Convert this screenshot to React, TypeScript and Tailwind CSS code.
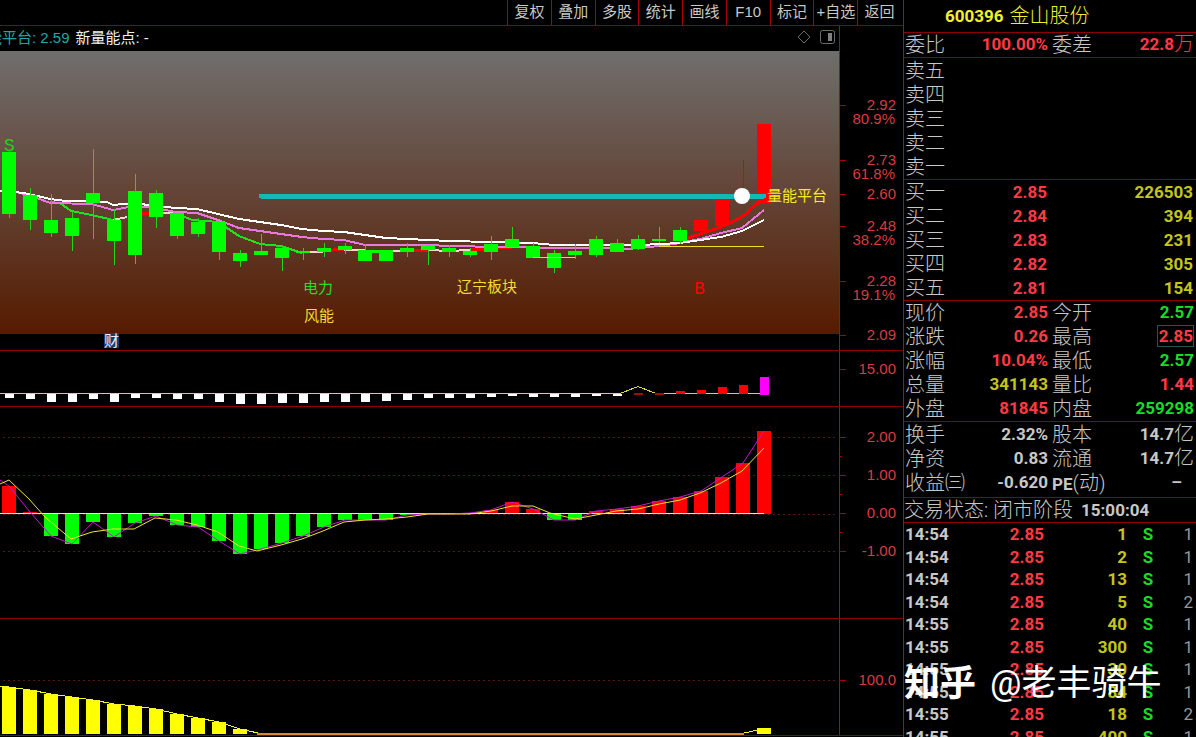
import type { ReactNode } from 'react'
import clsx from 'clsx'

const tools = ['复权', '叠加', '多股', '统计', '画线', 'F10', '标记', '+自选', '返回']

// All panes share one coordinate space: x 0-839, y 26-735.
const CHART_WIDTH = 839
const AXIS_WIDTH = 64

const barX = (i: number) => Math.round(9 + i * 20.97)

// [high, body top, body bottom, low]
const candles = [
  [152, 152, 214, 218],
  [188, 195, 220, 230],
  [194, 220, 233, 237],
  [212, 218, 236, 251],
  [149, 193, 203, 239],
  [209, 220, 241, 265],
  [174, 191, 255, 264],
  [190, 193, 217, 228],
  [213, 213, 236, 239],
  [218, 222, 234, 237],
  [222, 222, 252, 260],
  [250, 253, 261, 267],
  [234, 251, 255, 255],
  [245, 248, 258, 271],
  [248, 251, 253, 260],
  [243, 248, 252, 257],
  [243, 246, 250, 254],
  [244, 250, 261, 261],
  [250, 250, 261, 261],
  [243, 248, 252, 257],
  [245, 246, 250, 265],
  [245, 248, 252, 257],
  [248, 251, 255, 257],
  [236, 244, 252, 260],
  [227, 239, 247, 247],
  [243, 246, 258, 258],
  [250, 253, 268, 273],
  [244, 251, 255, 259],
  [236, 239, 255, 257],
  [239, 243, 252, 252],
  [235, 239, 249, 250],
  [227, 239, 241, 243],
  [227, 230, 241, 244],
  [220, 220, 231, 231],
  [199, 199, 226, 226],
  [160, 190, 200, 200],
  [124, 124, 203, 203],
]

const whiteBars = [
  398, 399, 402, 402, 399, 402, 398, 398, 399, 399, 402, 404, 404, 403, 403, 402, 402, 402, 401, 400, 398, 398, 398,
  397, 396, 397, 397, 397, 396, 396,
]
const redBars = [393, 393, 391, 390, 387, 385]

const momentum = [
  486, 512, 536, 544, 522, 537, 523, 516, 525, 527, 541, 554, 549, 543, 536, 527, 520, 520, 520, 515, 514, 514, 513,
  510, 502, 509, 520, 520, 511, 509, 506, 501, 497, 491, 477, 463, 431,
]

const decay = [687, 690, 694, 697, 700, 704, 706, 709, 714, 718, 722, 729]

type Row = [string, string, string, string, string, string]

const bids = [
  ['买一', '2.85', '226503'],
  ['买二', '2.84', '394'],
  ['买三', '2.83', '231'],
  ['买四', '2.82', '305'],
  ['买五', '2.81', '154'],
]

const RED = 'text-[#ff3a44]'
const GREEN = 'text-[#18dc28]'
const YELLOW = 'text-[#c4c41c]'
const GRAY = 'text-[#c8c8c8]'

const quotes: Row[] = [
  ['现价', '2.85', RED, '今开', '2.57', GREEN],
  ['涨跌', '0.26', RED, '最高', '2.85', RED],
  ['涨幅', '10.04%', RED, '最低', '2.57', GREEN],
  ['总量', '341143', YELLOW, '量比', '1.44', RED],
  ['外盘', '81845', RED, '内盘', '259298', GREEN],
]

const fundamentals: Row[] = [
  ['换手', '2.32%', GRAY, '股本', '14.7亿', GRAY],
  ['净资', '0.83', GRAY, '流通', '14.7亿', GRAY],
  ['收益㈢', '-0.620', GRAY, 'PE(动)', '–', GRAY],
]

const trades = [
  ['14:54', '2.85', '1', '1'],
  ['14:54', '2.85', '2', '1'],
  ['14:54', '2.85', '13', '1'],
  ['14:54', '2.85', '5', '2'],
  ['14:55', '2.85', '40', '1'],
  ['14:55', '2.85', '300', '1'],
  ['14:55', '2.85', '30', '1'],
  ['14:55', '2.85', '84', '1'],
  ['14:55', '2.85', '18', '2'],
  ['14:55', '2.85', '400', '1'],
]

function Chart({ top, height, className, children }: { top: number; height: number; className: string; children: ReactNode }) {
  return (
    <svg
      className={clsx('block w-full shrink-0', className)}
      viewBox={`0 ${top} ${CHART_WIDTH} ${height}`}
      preserveAspectRatio="none"
      shapeRendering="crispEdges"
      fill="none"
    >
      {children}
    </svg>
  )
}

type Tick = { y: number; label?: string; percent?: string }

function Axis({ top, height, className, ticks }: { top: number; height: number; className: string; ticks: Tick[] }) {
  return (
    <svg
      className={clsx('block w-16 shrink-0 border-l border-[#c00010]', className)}
      viewBox={`1 ${top} ${AXIS_WIDTH - 1} ${height}`}
      fill="#d83c40"
      fontSize="15"
      textAnchor="end"
    >
      {ticks.map(({ y, label, percent }) => (
        <g key={y}>
          <rect x="1" y={y} width={label ? 6 : 2} height="1" fill="#a8000c" />
          {label && (
            <text x="57" y={y + 5}>
              {label}
            </text>
          )}
          {percent && (
            <text x="56" y={y + 19}>
              {percent}
            </text>
          )}
        </g>
      ))}
    </svg>
  )
}

function Guide({ y }: { y: number }) {
  return <path d={`M3 ${y}.5H838`} stroke="#5c1418" strokeDasharray="2 3" />
}

function PricePane() {
  return (
    <Chart top={51} height={299} className="h-[299px]">
      <defs>
        <linearGradient id="sky" x1="0" y1="0" x2="0" y2="1">
          <stop offset="0" stopColor="#706e6d" />
          <stop offset="1" stopColor="#561b00" />
        </linearGradient>
      </defs>
      <rect x="0" y="51" width="839" height="283" fill="url(#sky)" />

      <g strokeWidth="2">
        <path d="M50 202L60 203L71 211L92 215L113 220M176 213L192 220L218 222L239 236L260 244L281 246L302 253" stroke="#22e022" />
        <path d="M113 220L127 217M155 213H176M302 252H323M344 250H365M386 251H407M428 250L449 251L470 250" stroke="#f4d8d0" />
        <path d="M323 251L344 249M407 250H428M470 250L512 247M141 213H149" stroke="#f00" strokeWidth="3" />
        <path
          d="M16 192L29 195L50 203L92 204L113 210L134 206L155 208L176 212L197 213L218 220L239 228L260 231L281 234L302 237L323 239L344 240L365 245H428L449 246L500 247L554 248H596L628 249L659 246L680 243L700 239L721 233L742 228L764 210"
          stroke="#e878e0"
        />
        <path
          d="M0 191L16 192L29 194L50 199L66 201H85L107 202L113 205L134 203L155 206L176 208L197 209L218 214L239 219L260 222L281 225L302 229L323 231L344 232L365 235L386 238L407 239L428 240L449 241L491 242L533 243L554 245H640L680 243L700 240L721 237L742 231L764 220"
          stroke="#fff"
        />
        <path d="M680 241L700 234L721 227L742 217L755 205L764 200" stroke="#f00" strokeWidth="3" />
        <path d="M659 246.5H764" stroke="#f0dc28" strokeWidth="1" />
      </g>

      {candles.map(([high, open, close, low], i) => {
        const color = i > 32 ? '#f00' : '#0f0'
        return (
          <g key={i}>
            <rect x={barX(i)} y={high} width="1" height={low - high} fill={i === 35 ? '#b41414' : i > 32 ? '#f00' : '#20d810'} />
            {i !== 35 && <rect x={barX(i) - 7} y={open} width="14" height={close - open} fill={color} />}
          </g>
        )
      })}
      <rect x="372" y="250" width="8" height="3" fill="#0f0" />
      <path d="M533 257.5H575" stroke="#f0dc28" />
      <path d="M261 196H764" stroke="#14b8b4" strokeWidth="5" strokeLinecap="round" />
      <circle cx="742" cy="196" r="8" fill="#fff" shapeRendering="auto" />

      <g fontSize="15">
        <text x="4" y="151" fill="#18d818" fontSize="18" fontFamily="Liberation Mono, monospace">S</text>
        <text x="303" y="293" fill="#28dc28">电力</text>
        <text x="304" y="321" fill="#f4dc30">风能</text>
        <text x="457" y="292" fill="#f4dc30">辽宁板块</text>
        <text x="767" y="201" fill="#f8ec20">量能平台</text>
        <text x="694" y="294" fill="#f00" fontSize="18" fontFamily="Liberation Mono, monospace">B</text>
        <rect x="104" y="333" width="15" height="15" fill="#143c70" />
        <text x="104" y="346" fill="#e8f0ff">财</text>
      </g>
    </Chart>
  )
}

function EnergyPane() {
  return (
    <Chart top={351} height={55} className="h-[55px]">
      {whiteBars.map((end, i) => (
        <rect key={i} x={barX(i) - 4} y="394" width="9" height={end - 394} fill="#fff" />
      ))}
      <path d="M0 393.5H620L638 386.5L656 393.5H764" stroke="#d8d83c" />
      {redBars.map((start, i) => (
        <rect key={i} x={barX(i + 30) - 4} y={start} width="9" height={Math.max(394 - start, 2)} fill={i < 2 ? '#a80c00' : '#f00'} />
      ))}
      <rect x="760" y="377" width="9" height="18" fill="#f0f" />
    </Chart>
  )
}

function MomentumPane() {
  return (
    <Chart top={407} height={211} className="h-[211px]">
      <Guide y={437} />
      <Guide y={475} />
      <Guide y={514} />
      <Guide y={551} />
      {momentum.map((value, i) => (
        <rect
          key={i}
          x={barX(i) - 7}
          y={Math.min(value, 514)}
          width="14"
          height={Math.abs(value - 514)}
          fill={value > 514 ? '#0f0' : '#f00'}
        />
      ))}
      <path d="M0 513.5H764" stroke="#f0dce8" />
      <g shapeRendering="auto">
        <polyline points={`0,480 ${momentum.map((value, i) => `${barX(i)},${value}`).join(' ')}`} stroke="#c01cc8" />
        <path
          d="M0 484L9 480L29 499L45 517L71 539L92 532L113 529H134L155 518L176 520L197 525L218 532L239 546L257 551L281 545L302 539L323 531L344 522L365 520L386 519L407 517L428 514L470 514L491 511L512 506H533L550 513L575 519L596 515L616 511L638 509L659 504L680 500L700 493L721 483L742 471L764 448"
          stroke="#f4e428"
        />
      </g>
    </Chart>
  )
}

function DecayPane() {
  return (
    <Chart top={619} height={116} className="h-[116px]">
      <Guide y={680} />
      {decay.map((start, i) => (
        <rect key={i} x={barX(i) - 7} y={start} width="14" height={734 - start} fill="#ff0" />
      ))}
      <rect x="757" y="728" width="14" height="6" fill="#ff0" />
      <polyline points={`0,686 ${decay.map((start, i) => `${barX(i)},${start}`).join(' ')} 258,733`} stroke="#f4f428" />
      <path d="M257 734H744" stroke="#d88830" strokeWidth="2" />
      <path d="M744 733L758 730" stroke="#f4f428" />
    </Chart>
  )
}

function Pane({ children }: { children: ReactNode }) {
  return <section className="flex shrink-0 border-b border-[#8c0008]">{children}</section>
}

function Num({ children, className }: { children: ReactNode; className?: string }) {
  return <span className={clsx('text-[17px] leading-[22px] font-bold', className)}>{children}</span>
}

function QuoteRow({ row }: { row: Row }) {
  const [label, value, color, label2, value2, color2] = row
  return (
    <div className="grid h-6 grid-cols-[143px_1fr] gap-x-1">
      <dl className="flex items-start justify-between">
        <dt>{label}</dt>
        <dd className={clsx('flex', color)}>
          <Num>{value}</Num>
        </dd>
      </dl>
      <dl className="flex items-start justify-between pr-[2px]">
        <dt>{label2.startsWith('PE') ? <><Num>PE</Num>(动)</> : label2}</dt>
        <dd className={clsx('flex h-[22px] items-center', color2, label2 === '最高' && 'border border-[#2c5050] pl-px')}>
          <Num>{value2.replace(/[万亿]/, '')}</Num>
          {/[万亿]/.test(value2) && value2.slice(-1)}
          {value2 === '–' && <span className="w-3" />}
        </dd>
      </dl>
    </div>
  )
}

function QuotePanel() {
  return (
    <aside className="relative flex w-[293px] shrink-0 flex-col overflow-hidden border-l border-[#c00010] font-[Roboto,'Noto_Sans_CJK_SC',sans-serif] text-[20px] leading-6 font-light text-[#c8c8c8]">
      <h1 className="flex h-8 shrink-0 items-center gap-1.5 pl-[41px] text-[#f0f02c]">
        <Num>600396</Num>
        <span className="font-light">金山股份</span>
      </h1>
      <div className="border-y border-[#8c0008] pl-px">
        <QuoteRow row={['委比', '100.00%', RED, '委差', '22.8万', RED]} />
      </div>
      <ul className="border-b border-[#8c0008] pt-px pl-px">
        {['卖五', '卖四', '卖三', '卖二', '卖一'].map((label) => (
          <li key={label} className="h-6">
            {label}
          </li>
        ))}
      </ul>
      <div className="border-b border-[#8c0008] pl-px">
        {bids.map(([label, price, volume]) => (
          <div key={label} className="flex h-6 items-center pr-[3px]">
            <span>{label}</span>
            <Num className={clsx('w-[102px] text-right', RED)}>{price}</Num>
            <Num className={clsx('flex-1 text-right', YELLOW)}>{volume}</Num>
          </div>
        ))}
      </div>
      <div className="border-b border-[#8c0008] pl-px">
        {quotes.map((row) => (
          <QuoteRow key={row[0]} row={row} />
        ))}
      </div>
      <div className="border-b border-[#8c0008] pt-px pb-[2px] pl-px">
        {fundamentals.map((row) => (
          <QuoteRow key={row[0]} row={row} />
        ))}
      </div>
      <p className="flex h-[25px] shrink-0 items-center gap-2 border-b border-[#8c0008]">
        交易状态: 闭市阶段 <Num>15:00:04</Num>
      </p>
      <table className="w-full table-fixed text-[17px] leading-[22px] font-bold">
        <tbody>
          {trades.map(([time, price, volume, count], i) => (
            <tr key={i} className="h-[22px] even:h-[23px]">
              <td className="w-[60px] pl-px">{time}</td>
              <td className={clsx('w-[80px] text-right', RED)}>{price}</td>
              <td className={clsx('w-[83px] text-right', YELLOW)}>{volume}</td>
              <td className={clsx('w-[42px] text-center', GREEN)}>S</td>
              <td className="pr-[3px] text-right font-normal text-[#989898]">{count}</td>
            </tr>
          ))}
        </tbody>
      </table>
      <div className="absolute top-[660px] left-0 flex items-center gap-[14px] leading-[48px] whitespace-nowrap text-white">
        <span className="text-[36px] font-bold">知乎</span>
        <span className="text-[35px] font-normal">@老丰骑牛</span>
      </div>
    </aside>
  )
}

export default function App() {
  return (
    <div className="flex h-screen overflow-hidden bg-black font-['Liberation_Sans','Noto_Sans_CJK_SC',sans-serif]">
      <main className="flex min-w-0 flex-1 flex-col">
        <nav className="flex h-[26px] shrink-0 justify-end border-b border-[#8c0008] pr-[2px]">
          <div className="grid w-[394px] grid-cols-9">
            {tools.map((tool) => (
              <button key={tool} className="border-l border-[#a8000c] text-[15px] whitespace-nowrap text-[#c8c8c8]">
                {tool}
              </button>
            ))}
          </div>
        </nav>

        <Pane>
          <div className="min-w-0 flex-1">
            <header className="flex h-[25px] items-center overflow-hidden text-[15px] leading-[22px] whitespace-nowrap">
              <span className="-ml-[13px] pb-[2px] text-[#20a8a4]">能平台: 2.59</span>
              <span className="ml-[6px] pb-[2px] text-[#f0f0f0]">新量能点: -</span>
              <svg className="mr-1 mb-[3px] ml-auto h-4 w-10" viewBox="0 0 40 16" fill="none" stroke="#6c6c6c">
                <path d="M9 2L15 8L9 14L3 8Z" />
                <rect x="25.5" y="1.5" width="14" height="13" rx="2" />
                <rect x="33" y="4" width="4" height="8" fill="#808080" stroke="none" />
              </svg>
            </header>
            <PricePane />
          </div>
          <Axis
            top={26}
            height={324}
            className="h-[324px]"
            ticks={[
              { y: 105, label: '2.92', percent: '80.9%' },
              { y: 160, label: '2.73', percent: '61.8%' },
              { y: 194, label: '2.60' },
              { y: 226, label: '2.48', percent: '38.2%' },
              { y: 281, label: '2.28', percent: '19.1%' },
              { y: 335, label: '2.09' },
            ]}
          />
        </Pane>

        <Pane>
          <div className="min-w-0 flex-1">
            <EnergyPane />
          </div>
          <Axis top={351} height={55} className="h-[55px]" ticks={[{ y: 369, label: '15.00' }]} />
        </Pane>

        <Pane>
          <div className="min-w-0 flex-1">
            <MomentumPane />
          </div>
          <Axis
            top={407}
            height={211}
            className="h-[211px]"
            ticks={[
              { y: 437, label: '2.00' },
              { y: 456 },
              { y: 475, label: '1.00' },
              { y: 494 },
              { y: 513, label: '0.00' },
              { y: 532 },
              { y: 551, label: '-1.00' },
            ]}
          />
        </Pane>

        <Pane>
          <div className="min-w-0 flex-1">
            <DecayPane />
          </div>
          <Axis top={619} height={116} className="h-[116px]" ticks={[{ y: 680, label: '100.0' }]} />
        </Pane>
      </main>
      <QuotePanel />
    </div>
  )
}
